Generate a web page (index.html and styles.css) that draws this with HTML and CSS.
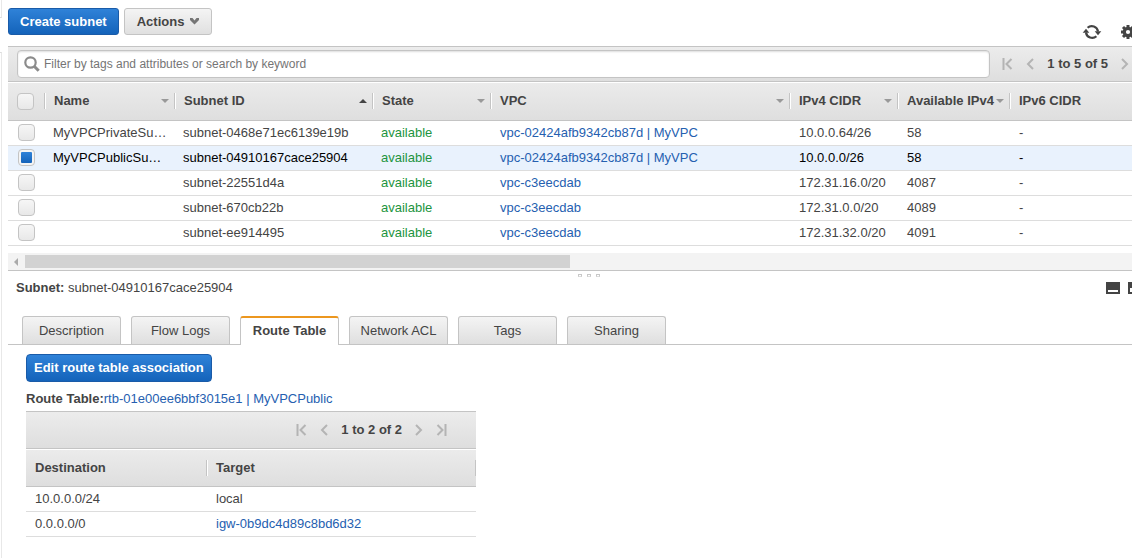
FILE: index.html
```html
<!DOCTYPE html>
<html lang="en">
<head>
<meta charset="utf-8">
<title>Subnets</title>
<link rel="stylesheet" href="styles.css">
</head>
<body>
<svg class="defs" aria-hidden="true">
  <symbol id="first" viewBox="0 0 11 12"><path d="M1.500 0v12M9.500 1L4.500 6l5 5" fill="none" stroke="currentColor" stroke-width="2"/></symbol>
  <symbol id="prev" viewBox="0 0 8 12"><path d="M7 1L2 6l5 5" fill="none" stroke="currentColor" stroke-width="2"/></symbol>
  <symbol id="next" viewBox="0 0 8 12"><path d="M1 1l5 5-5 5" fill="none" stroke="currentColor" stroke-width="2"/></symbol>
  <symbol id="last" viewBox="0 0 11 12"><path d="M9.500 0v12M1.500 1l5 5-5 5" fill="none" stroke="currentColor" stroke-width="2"/></symbol>
</svg>
<div class="app">
  <div class="rail"><div class="rail-top"></div><div class="rail-nav"></div></div>
  <main class="main">
    <header class="toolbar">
      <button class="btn btn-primary" type="button">Create subnet</button>
      <button class="btn btn-plain" type="button">Actions
        <svg width="9" height="7" viewBox="0 0 9 7"><path d="M0 0h2.500l2 2.500L6.500 0H9v2L4.500 6.500 0 2z" fill="#757575"/></svg>
      </button>
      <div class="tools">
        <button class="icon-btn" type="button" aria-label="Refresh">
          <svg width="20" height="16" viewBox="0 0 20 16"><g fill="none" stroke="#444" stroke-width="2.200"><path d="M5.600 3.800A6.200 6.200 0 0 1 16 7.500"/><path d="M14.400 12.200A6.200 6.200 0 0 1 4 8.500"/></g><path d="M12.700 7.200h6.600L16 11.200zM.7 8.800h6.600L4 4.800z" fill="#444"/></svg>
        </button>
        <button class="icon-btn" type="button" aria-label="Settings">
          <svg width="14" height="14" viewBox="0 0 14 14"><circle cx="7" cy="7" r="3.700" fill="none" stroke="#444" stroke-width="3.200"/><path d="M7 0v3M7 11v3M0 7h3M11 7h3M2 2l2.200 2.200M9.800 9.800L12 12M2 12l2.200-2.200M9.800 4.200L12 2" stroke="#444" stroke-width="3"/></svg>
        </button>
      </div>
    </header>

    <section class="list">
      <div class="filter">
        <label class="search">
          <svg width="16" height="16" viewBox="0 0 16 16"><circle cx="6.500" cy="6.500" r="5.200" fill="none" stroke="#8b8b8b" stroke-width="2.200"/><path d="M10.200 10.200l4.500 4.500" stroke="#8b8b8b" stroke-width="3"/></svg>
          <input type="text" aria-label="Filter subnets" placeholder="Filter by tags and attributes or search by keyword">
        </label>
        <nav class="pager" aria-label="Subnet pages">
          <button type="button" aria-label="First page"><svg width="11" height="12"><use href="#first"/></svg></button>
          <button type="button" aria-label="Previous page"><svg width="8" height="12"><use href="#prev"/></svg></button>
          <strong>1 to 5 of 5</strong>
          <button type="button" aria-label="Next page"><svg width="8" height="12"><use href="#next"/></svg></button>
        </nav>
      </div>
      <table class="grid">
        <colgroup><col class="c-check"><col class="c-name"><col class="c-id"><col class="c-state"><col class="c-vpc"><col class="c-v4"><col class="c-avail"><col></colgroup>
        <thead>
          <tr>
            <th><input class="tick" type="checkbox" aria-label="Select all"></th>
            <th><div class="head">Name<i class="sort"></i></div></th>
            <th><div class="head">Subnet ID<i class="sort asc"></i></div></th>
            <th><div class="head">State<i class="sort"></i></div></th>
            <th><div class="head">VPC<i class="sort"></i></div></th>
            <th><div class="head">IPv4 CIDR<i class="sort"></i></div></th>
            <th><div class="head">Available IPv4<i class="sort"></i></div></th>
            <th><div class="head">IPv6 CIDR</div></th>
          </tr>
        </thead>
        <tbody>
          <tr><td><input class="tick" type="checkbox" aria-label="Select subnet-0468e71ec6139e19b"></td><td>MyVPCPrivateSu…</td><td>subnet-0468e71ec6139e19b</td><td class="ok">available</td><td><a href="#">vpc-02424afb9342cb87d | MyVPC</a></td><td>10.0.0.64/26</td><td>58</td><td>-</td></tr>
          <tr class="selected"><td><input class="tick" type="checkbox" checked aria-label="Select subnet-04910167cace25904"></td><td>MyVPCPublicSu…</td><td>subnet-04910167cace25904</td><td class="ok">available</td><td><a href="#">vpc-02424afb9342cb87d | MyVPC</a></td><td>10.0.0.0/26</td><td>58</td><td>-</td></tr>
          <tr><td><input class="tick" type="checkbox" aria-label="Select subnet-22551d4a"></td><td></td><td>subnet-22551d4a</td><td class="ok">available</td><td><a href="#">vpc-c3eecdab</a></td><td>172.31.16.0/20</td><td>4087</td><td>-</td></tr>
          <tr><td><input class="tick" type="checkbox" aria-label="Select subnet-670cb22b"></td><td></td><td>subnet-670cb22b</td><td class="ok">available</td><td><a href="#">vpc-c3eecdab</a></td><td>172.31.0.0/20</td><td>4089</td><td>-</td></tr>
          <tr><td><input class="tick" type="checkbox" aria-label="Select subnet-ee914495"></td><td></td><td>subnet-ee914495</td><td class="ok">available</td><td><a href="#">vpc-c3eecdab</a></td><td>172.31.32.0/20</td><td>4091</td><td>-</td></tr>
        </tbody>
      </table>
      <div class="scroll"><i class="scroll-left"></i><div class="thumb"></div></div>
    </section>

    <div class="splitter"><i></i><i></i><i></i></div>

    <section class="detail">
      <div class="detail-title">
        <div><strong>Subnet:</strong> subnet-04910167cace25904</div>
        <div class="panes">
          <button class="icon-btn" type="button" aria-label="Small pane"><svg width="14" height="12" viewBox="0 0 14 12"><path d="M0 0h14v12H0z" fill="#444"/><path d="M2 8h10v2H2z" fill="#fff"/></svg></button>
          <button class="icon-btn" type="button" aria-label="Medium pane"><svg width="14" height="12" viewBox="0 0 14 12"><path d="M0 0h14v12H0z" fill="#444"/><path d="M2 6h10v4H2z" fill="#fff"/></svg></button>
        </div>
      </div>
      <div class="tabs" role="tablist">
        <button type="button" role="tab">Description</button>
        <button type="button" role="tab">Flow Logs</button>
        <button type="button" role="tab" class="active" aria-selected="true">Route Table</button>
        <button type="button" role="tab">Network ACL</button>
        <button type="button" role="tab">Tags</button>
        <button type="button" role="tab">Sharing</button>
      </div>
      <div class="panel">
        <button class="btn btn-primary" type="button">Edit route table association</button>
        <div class="route-title"><strong>Route Table:</strong><a href="#">rtb-01e00ee6bbf3015e1 | MyVPCPublic</a></div>
        <div class="routes">
          <nav class="pager routes-pager" aria-label="Route pages">
            <button type="button" aria-label="First page"><svg width="11" height="12"><use href="#first"/></svg></button>
            <button type="button" aria-label="Previous page"><svg width="8" height="12"><use href="#prev"/></svg></button>
            <strong>1 to 2 of 2</strong>
            <button type="button" aria-label="Next page"><svg width="8" height="12"><use href="#next"/></svg></button>
            <button type="button" aria-label="Last page"><svg width="11" height="12"><use href="#last"/></svg></button>
          </nav>
          <table class="grid">
            <colgroup><col class="c-dest"><col></colgroup>
            <thead><tr><th><div class="head">Destination</div></th><th><div class="head head-end">Target</div></th></tr></thead>
            <tbody>
              <tr><td>10.0.0.0/24</td><td>local</td></tr>
              <tr><td>0.0.0.0/0</td><td><a href="#">igw-0b9dc4d89c8bd6d32</a></td></tr>
            </tbody>
          </table>
        </div>
      </div>
    </section>
  </main>
</div>
</body>
</html>
```
FILE: styles.css
```css
* { box-sizing: border-box; }
body {
  margin: 0;
  overflow-x: hidden;
  background: #fff;
  color: #444;
  font: 13px/16px "Liberation Sans", Arial, sans-serif;
}
button, input { font: inherit; color: inherit; margin: 0; }
button { padding: 0; border: 0; background: none; cursor: pointer; }
svg { display: block; }
a { color: #2560b0; text-decoration: none; }
.defs { display: none; }

.app { display: flex; min-height: 100vh; }
.rail { display: flex; flex-direction: column; gap: 34px; width: 2px; margin-right: 6px; }
.rail-top { height: 18px; border-right: 1px solid #e8e8e8; border-bottom: 1px solid #ddd; }
.rail-nav { flex: 1; border-right: 1px solid #e8e8e8; border-top: 1px solid #ddd; }
.main { flex: 1; min-width: 0; overflow: hidden; }

.toolbar { display: flex; gap: 5px; height: 46px; padding-top: 8px; align-items: flex-start; }
.btn {
  display: flex; align-items: center; gap: 6px;
  height: 27px; border-radius: 3px;
  font-weight: bold;
}
.btn-primary {
  padding: 0 11px;
  border: 1px solid #1a5ba8;
  background: linear-gradient(#2f82d8, #1463ba);
  color: #fff;
}
.btn-plain {
  padding: 0 12px;
  border: 1px solid #c4c4c4;
  background: linear-gradient(#f4f4f4, #e0e0e0);
}
.tools { display: flex; align-items: center; gap: 19px; margin: 16px -3px 0 auto; }

.filter {
  display: flex; align-items: center; gap: 12px;
  height: 36px; padding-left: 9px;
  border-top: 1px solid #c4c4c4; border-bottom: 1px solid #c4c4c4;
  background: linear-gradient(#ececec, #dedede);
}
.search {
  display: flex; flex: 1; align-items: center; gap: 4px;
  height: 28px; padding-left: 6px;
  border: 1px solid #c4c4c4; border-radius: 4px;
  background: #fff;
  box-shadow: inset 0 1px 2px #ddd;
}
.search input { flex: 1; min-width: 0; padding: 0; border: 0; outline: 0; background: none; font-size: 12px; }
.search input::placeholder { color: #757575; opacity: 1; }
.pager { display: flex; align-items: center; gap: 13px; color: #b4b4b4; }
.pager strong { color: #444; white-space: nowrap; }
.filter .pager { padding-right: 3px; }

.grid { width: 100%; table-layout: fixed; border-collapse: separate; border-spacing: 0; }
.c-check { width: 36px; }
.c-name { width: 130px; }
.c-id { width: 198px; }
.c-state { width: 118px; }
.c-vpc { width: 299px; }
.c-v4 { width: 108px; }
.c-avail { width: 112px; }
.c-dest { width: 180px; }
.grid thead tr { background: linear-gradient(#fff 1px, #ebebeb 1px, #dedede); }
.grid th { height: 39px; padding: 0; border-bottom: 1px solid #c4c4c4; text-align: left; }
.routes .grid th { height: 38px; }
.grid td {
  height: 25px; padding: 0 0 0 10px;
  border-bottom: 1px solid #ddd;
  overflow: hidden; white-space: nowrap;
}
.list .grid td { padding-left: 9px; }
.list .grid td:first-child { padding: 0 0 1px 10px; }
.list .grid td:nth-child(n+5) { padding-left: 10px; }
.head {
  display: flex; align-items: center; justify-content: space-between;
  height: 16px; padding: 0 5px 0 9px;
  border-left: 1px solid #c4c4c4;
  box-shadow: inset 1px 0 #fff;
  white-space: nowrap;
}
.grid th:first-child .head { border-left: 0; box-shadow: none; }
.routes .grid td:first-child { padding-left: 9px; }
.head-end { border-right: 1px solid #c4c4c4; }
.sort { border: 4px solid transparent; border-top-color: #999; border-bottom: 0; }
.sort.asc { border-top: 0; border-bottom: 4px solid #444; }
.ok { color: #1d9440; }
.selected { background: #e9f2fd; color: #000; }

.tick {
  appearance: none; display: block;
  width: 17px; height: 17px;
  border: 1px solid #c4c4c4; border-radius: 4px;
  background: linear-gradient(#f6f6f6, #e8e8e8);
}
th .tick { margin-left: 9px; }
.tick:checked { padding: 1px; border-width: 1px; background: linear-gradient(#2f82d8, #1463ba) content-box, #f4f4f4; padding: 2px; }

.scroll {
  display: flex; align-items: center;
  height: 18px; margin-top: 7px;
  border-bottom: 1px solid #c4c4c4;
  background: #f3f3f3;
}
.scroll-left { margin: 0 7px 0 2px; border: 4px solid transparent; border-right-color: #aaa; }
.thumb { width: 48.5%; height: 13px; background: #d2d2d2; }
.splitter { display: flex; justify-content: center; gap: 5px; padding: 3px 0 3px 38px; }
.splitter i { width: 4px; height: 3px; border: 1px solid #c8c8c8; border-bottom-color: #ddd; }

.detail-title { display: flex; align-items: center; justify-content: space-between; height: 16px; padding-left: 8px; }
.panes { display: flex; gap: 8px; margin-right: -10px; }
.tabs { display: flex; gap: 10px; margin-top: 20px; padding-left: 14px; border-bottom: 1px solid #c4c4c4; }
.tabs button {
  width: 99px; height: 28px;
  border: 1px solid #c4c4c4; border-bottom: 0; border-radius: 3px 3px 0 0;
  background: linear-gradient(#f4f4f4, #dfdfdf);
}
.tabs .active {
  height: 29px; margin-bottom: -1px; padding-bottom: 1px;
  border-top: 2px solid #ec971f;
  background: #fff;
  font-weight: bold;
}
.panel { padding: 9px 18px 0; }
.panel .btn { height: 28px; padding: 0 7px; border-radius: 4px; }
.route-title { margin: 9px 0 4px; }
.routes { max-width: 450px; }
.routes-pager {
  height: 38px; padding-right: 29px; justify-content: flex-end;
  border-top: 1px solid #c4c4c4; border-bottom: 1px solid #c4c4c4;
  background: linear-gradient(#ececec, #dedede);
}
```
